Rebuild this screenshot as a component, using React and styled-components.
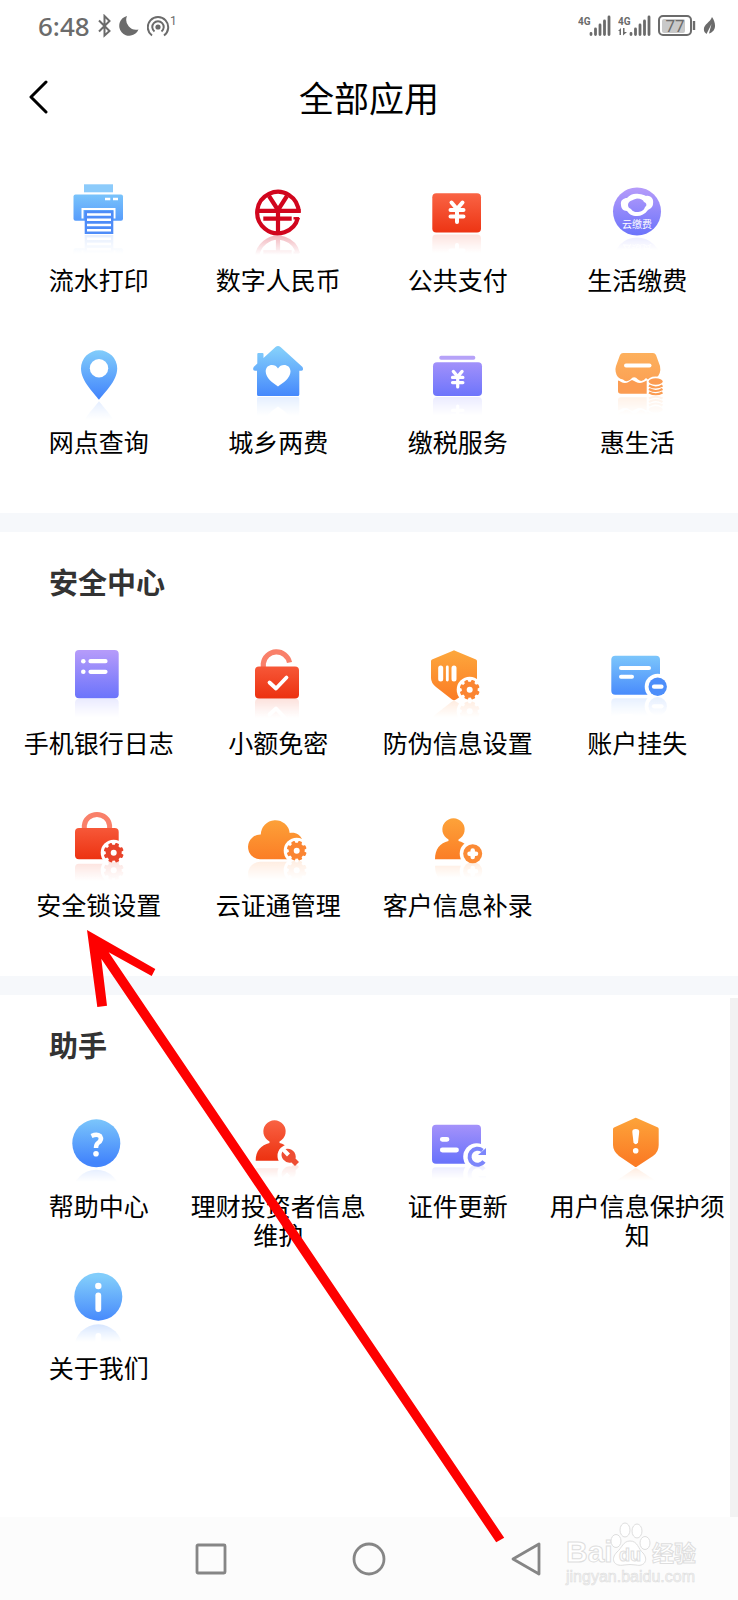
import React, { useId } from 'react';
import styled, { createGlobalStyle } from 'styled-components';

const GlobalStyle = createGlobalStyle`
  body {
    margin: 0;
    background: #fff;
    font-family: "Noto Sans CJK SC", "Noto Sans", sans-serif;
    color: #000;
  }

  button {
    border: 0;
    padding: 0;
    background: none;
    font: inherit;
    color: inherit;
    cursor: pointer;
  }

  svg {
    display: block;
  }
`

const Page = styled.div`
  position: relative;
  min-height: 100vh;
  display: flex;
  flex-direction: column;
  overflow: hidden;
`

const StatusBar = styled.div`
  display: flex;
  align-items: center;
  justify-content: space-between;
  height: 52px;
  padding: 0 22px 0 38px;
  color: #6b6b6b;
`

const StatusGroup = styled.div`
  display: flex;
  align-items: center;
  gap: ${props => props.$gap}px;
`

const Clock = styled.span`
  font: 500 26px/32px "Noto Sans", sans-serif;
`

const Header = styled.header`
  display: grid;
  grid-template-columns: 60px 1fr 60px;
  align-items: center;
  height: 90px;

  h1 {
    margin: 0;
    text-align: center;
    font-size: 35px;
    font-weight: 400;
    line-height: 44px;
  }
`

const BackButton = styled.button`
  padding-left: 28px;
`

const Section = styled.section`
  position: relative;
  flex: ${props => props.$fill ? '1 0 auto' : '0 0 auto'};
  padding: ${props => props.$first ? '34px 11px 13px 9px' : '29px 11px 13px 9px'};
`

const Heading = styled.h2`
  margin: 0 0 38px 40px;
  font-size: 29px;
  line-height: 40px;
  font-weight: 700;
  color: #333;
`

const AppGrid = styled.div`
  display: grid;
  grid-template-columns: repeat(4, 1fr);
  grid-auto-rows: 162px;
`

const AppButton = styled.button`
  display: flex;
  flex-direction: column;
  align-items: center;
`

const Label = styled.span`
  font-size: 25px;
  line-height: 29px;
`

const Divider = styled.div`
  height: 19px;
  background: #f6f8fb;
`

const ScrollTrack = styled.div`
  position: absolute;
  top: 3px;
  right: 0;
  bottom: 0;
  width: 8px;
  background: #f2f2f2;
`

const NavBar = styled.nav`
  position: relative;
  display: flex;
  justify-content: center;
  align-items: center;
  gap: 125px;
  height: 83px;
  background: #fcfcfc;
`

const Watermark = styled.svg`
  position: absolute;
  right: 36px;
  top: 2px;
`

const Pointer = styled.svg`
  position: absolute;
  left: 87px;
  top: 930px;
  pointer-events: none;
`

const gradients = {
  blue: ['#82cdfb', '#4385fc'],
  red: ['#fb6a4b', '#ec300f'],
  orange: ['#fda73c', '#fb7c25'],
  peach: ['#fdb25e', '#fb9a50'],
  purple: ['#b59bfa', '#6a73fb'],
}

function Gradients() {
  return (
    <svg width="0" height="0" style={{ position: 'absolute' }} aria-hidden="true">
      <defs>
        {Object.entries(gradients).map(([name, [from, to]]) => (
          <linearGradient key={name} id={name} gradientUnits="userSpaceOnUse" x1="0" y1="12" x2="0" y2="60">
            <stop offset="0" stopColor={from} />
            <stop offset="1" stopColor={to} />
          </linearGradient>
        ))}
      </defs>
    </svg>
  )
}

// draws the icon and its fading mirror image under the base line
function IconFrame({ base, fade = 20, glow = 0.15, children }) {
  const id = useId()

  return (
    <svg width="90" height="89" viewBox="0 0 90 89" aria-hidden="true">
      <defs>
        <linearGradient id={`${id}g`} gradientUnits="userSpaceOnUse" x1="0" y1={base} x2="0" y2={base + fade}>
          <stop offset="0" stopColor="#fff" stopOpacity={glow} />
          <stop offset="1" stopColor="#fff" stopOpacity="0" />
        </linearGradient>
        <mask id={`${id}m`} maskUnits="userSpaceOnUse" x="0" y={base} width="90" height={fade}>
          <rect x="0" y={base} width="90" height={fade} fill={`url(#${id}g)`} />
        </mask>
      </defs>
      {children}
      <g mask={`url(#${id}m)`}>
        <g transform={`translate(0 ${base * 2 + 1}) scale(1 -1)`}>{children}</g>
      </g>
    </svg>
  )
}

const white = { fill: 'none', stroke: '#fff', strokeLinecap: 'round', strokeLinejoin: 'round' }

function Gear({ x, y, color }) {
  return (
    <g transform={`translate(${x} ${y})`}>
      <circle r="13" fill="#fff" />
      <g fill={color}>
        <circle r="8" />
        {[0, 45, 90, 135].map(angle => (
          <rect key={angle} x="-2" y="-10" width="4" height="20" rx="1" transform={`rotate(${angle + 22})`} />
        ))}
      </g>
      <circle r="3" fill="#fff" />
    </g>
  )
}

function Yuan({ x, y, scale = 1 }) {
  return (
    <g transform={`translate(${x} ${y}) scale(${scale})`} {...white} strokeWidth="4">
      <path d="M-5.500 -9.500L0 -3L5.500 -9.500M0 -3V10M-6.500 -2H6.500M-6.500 4.500H6.500" />
    </g>
  )
}

const icons = {
  printer: (
    <IconFrame base={58}>
      <rect x="30" y="8.300" width="29" height="8" fill="#8ccbfb" />
      <rect x="19.500" y="18.500" width="49.500" height="26.300" rx="2" fill="url(#blue)" />
      <path d="M51 23H56.300M59 23H64" stroke="#fff" strokeWidth="2.600" />
      <path d="M28.500 42.500V33H60.500V42.500" fill="none" stroke="#fff" strokeWidth="2" />
      <rect x="30.700" y="34.700" width="28.600" height="23.300" fill="#4e8cf8" />
      <path d="M33 38.500H57M33 43.700H57M33 49H57M33 54.300H57" stroke="#fff" strokeWidth="2.500" />
    </IconFrame>
  ),
  ecny: (
    <IconFrame base={59} glow={0.3}>
      <g fill="none" stroke="#d1051d" strokeWidth="4.200">
        <path d="M65.600 36.500A20.700 20.700 0 1 0 65 41.500" />
        <path d="M25.500 34.800H67.700M30.300 42.700H58.700M45 34V57M36 20L45 34L54 20" />
        <path d="M60.500 42.300H66" strokeWidth="2.500" />
      </g>
    </IconFrame>
  ),
  payment: (
    <IconFrame base={57}>
      <rect x="19.300" y="17.300" width="48.700" height="39.300" rx="4" fill="url(#red)" />
      <Yuan x={44} y={36} />
    </IconFrame>
  ),
  cloudFee: (
    <IconFrame base={60} fade={14}>
      <circle cx="45" cy="35.500" r="24" fill="url(#purple)" />
      <path
        d="M29 29C28 24 32 22 35 22C38 18 43 17 47 18C50 18 52 19 54 20C59 19 62 23 61 28C61 31 58 33 56 34C53 38 49 40 45 40C40 40 37 38 35 35C31 35 29 32 29 29ZM36 29C36 25 41 24 45 22.500C49 22.500 51 24 52 26C55 27 55 30 53 31C52 35 48 36 45 36C41 36 40 34 39 33C37 32 36 31 36 29Z"
        fill="#fff"
        fillRule="evenodd"
      />
      <text x="45" y="52" textAnchor="middle" fontSize="10" fill="#fff">云缴费</text>
    </IconFrame>
  ),
  pin: (
    <IconFrame base={62}>
      <path d="M45 61.700C40 55 27 43 27 30.400A18.100 18.100 0 0 1 63.200 30.400C63.200 43 50 55 45 61.700Z" fill="url(#blue)" />
      <circle cx="45" cy="30.300" r="9.200" fill="#fff" />
    </IconFrame>
  ),
  house: (
    <IconFrame base={58}>
      <path
        d="M42.500 9Q45 7 47.500 9L69.500 29Q71 32.500 68.500 32.700H66.300V56.500Q66.300 58 64.800 58H25.500Q24 58 24 56.500V32.700H22Q19 32.500 20.700 29L24.300 25.500V16Q24.300 15 25.300 15H29.500Q30.500 15 30.500 16V20Z"
        fill="url(#blue)"
      />
      <path d="M45 48.500C40 45 32.700 40 32.700 33.500C32.700 26 42 25 45 30.500C48 25 57.500 26 57.500 33.500C57.500 40 50 45 45 48.500Z" fill="#fff" />
    </IconFrame>
  ),
  tax: (
    <IconFrame base={58}>
      <rect x="26.300" y="17.700" width="36" height="4" rx="1.800" fill="#b6a2f8" />
      <rect x="20" y="24.300" width="49" height="33.700" rx="4" fill="url(#purple)" />
      <Yuan x={44.7} y={41} scale={0.8} />
    </IconFrame>
  ),
  shop: (
    <IconFrame base={57}>
      <path d="M31 15H61Q63 15 64 17L68 28Q69.500 36 64 40C61 43 57 43 54 40Q50 45 46 41.500Q42 37 38.500 41.500Q34 45 31 41.500Q25 41 23.700 34Q23 31 24 28L28 17Q29 15 31 15Z" fill="url(#peach)" />
      <path d="M34 27.500H57.500" {...white} strokeWidth="4" />
      <path d="M26 42.500C28 43 30 45 33 45C36 45 37 43.500 40 42C43 43.500 45 45 48 45C50 45 52 44 54.700 42.500V55.700H29Q26 55.700 26 53Z" fill="#fb9c52" />
      <ellipse cx="63.700" cy="43.500" rx="8.500" ry="5" fill="#fff" />
      <ellipse cx="63.700" cy="43.500" rx="7" ry="3.300" fill="#fb9c52" />
      <path d="M57 47.500Q63.700 51.500 70.500 47.500M57 51Q63.700 55 70.500 51M57 54.500Q63.700 58 70.500 54.500" fill="none" stroke="#fb9c52" strokeWidth="2.200" />
    </IconFrame>
  ),
  log: (
    <IconFrame base={59}>
      <rect x="21" y="11" width="43.700" height="48.300" rx="4" fill="url(#purple)" />
      <circle cx="29.300" cy="22.200" r="2.300" fill="#fff" />
      <circle cx="29.300" cy="32.800" r="2.300" fill="#fff" />
      <path d="M36.500 22.200H51.500M36.500 32.800H51.500" {...white} strokeWidth="4.200" />
    </IconFrame>
  ),
  unlock: (
    <IconFrame base={59}>
      <path d="M30.300 29V24.500A13.300 13.300 0 0 1 56.500 23.500" fill="none" stroke="#f9806a" strokeWidth="5.200" />
      <rect x="22" y="27.500" width="44" height="32" rx="4" fill="url(#red)" />
      <path d="M36.500 43.500L43 49.500L53.500 38.500" {...white} strokeWidth="3.800" />
    </IconFrame>
  ),
  shieldGear: (
    <IconFrame base={61} fade={18}>
      <path d="M40 11.700Q41 11 42 11.700L63 20.500Q64 21 64 22V42Q64 46 60 49L43 60.500Q41 62 39 60.500L23 48Q18 44 18 39V22Q18 21 19 20.500Z" fill="url(#orange)" />
      <path d="M27.700 29V40M41 29V40" {...white} strokeWidth="5" />
      <path d="M34.300 28V41" {...white} strokeWidth="2.800" />
      <Gear x={56.7} y={50.7} color="#fb8532" />
    </IconFrame>
  ),
  cardMinus: (
    <IconFrame base={57}>
      <rect x="19.300" y="16.700" width="48.700" height="39" rx="4" fill="url(#blue)" />
      <path d="M29 29H57M29 37.700H40" {...white} strokeWidth="4" />
      <circle cx="65.700" cy="47.700" r="13" fill="#fff" />
      <circle cx="65.700" cy="47.700" r="9.200" fill="#4d8efa" />
      <path d="M62 47.700H69.500" {...white} strokeWidth="4.200" />
    </IconFrame>
  ),
  lockGear: (
    <IconFrame base={60}>
      <path d="M30.300 28V24.500A12.700 12 0 0 1 55.600 24.500V28" fill="none" stroke="#f9806a" strokeWidth="5" />
      <rect x="21" y="27" width="43.700" height="31.300" rx="4" fill="url(#red)" />
      <Gear x={59.7} y={51.7} color="#e8432a" />
    </IconFrame>
  ),
  cloudGear: (
    <IconFrame base={59}>
      <path d="M27 58.300A12.300 12.300 0 1 1 27.800 33.600A14.500 14.500 0 0 1 56.700 32C63 31 67 34 69 38V58.300Z" fill="url(#orange)" />
      <Gear x={63.7} y={49.7} color="#fb8532" />
    </IconFrame>
  ),
  userPlus: (
    <IconFrame base={61} fade={16}>
      <path d="M35.500 38.500A11.200 11.200 0 1 1 45.500 38.500V40C53 42 57 46 58 58.300H22C22 48 27 42 35.500 40Z" fill="url(#orange)" />
      <circle cx="59.700" cy="52.700" r="13" fill="#fff" />
      <circle cx="59.700" cy="52.700" r="9.500" fill="#fb8a35" />
      <path d="M59.700 49.500V56M56.500 52.700H63" {...white} strokeWidth="4.500" />
    </IconFrame>
  ),
  help: (
    <IconFrame base={66} fade={14}>
      <circle cx="42.300" cy="41.300" r="24" fill="url(#blue)" />
      <path d="M37.500 34Q43 31.500 46 34Q48.500 38 44 41Q42 42.500 42 46" {...white} strokeLinecap="butt" strokeWidth="4.500" />
      <circle cx="42" cy="51.700" r="2.800" fill="#fff" />
    </IconFrame>
  ),
  userWrench: (
    <IconFrame base={62} fade={14}>
      <path d="M36.500 39.500A11.200 11.200 0 1 1 46.500 39.500V41C54 43 58 47 59 58.700H22.700C22.700 49 28 43 36.500 41Z" fill="url(#red)" />
      <circle cx="56" cy="54" r="11.500" fill="#fff" />
      <path d="M56 54L64 62" stroke="#fff" strokeWidth="9" />
      <path d="M49.300 49.500L54 54.500L57 51.500L52.500 47A8 8 0 0 1 62.500 56.500L66 60L62 64L58.500 60.500A8 8 0 0 1 49.300 49.500Z" fill="#ee4d33" />
    </IconFrame>
  ),
  idRefresh: (
    <IconFrame base={63} fade={14}>
      <rect x="19" y="22.700" width="49" height="39" rx="4" fill="url(#purple)" />
      <path d="M29.300 37.300H34M29.300 48H43.500" {...white} strokeWidth="4.800" />
      <circle cx="63.700" cy="54.700" r="13.500" fill="#fff" />
      <path d="M71 59.500A8 8 0 1 1 69.500 48.500" fill="none" stroke="#7c86fb" strokeWidth="4" />
      <path d="M73 46V53H65Z" fill="#7c86fb" />
    </IconFrame>
  ),
  shieldAlert: (
    <IconFrame base={65} fade={14}>
      <path d="M43 16Q43.700 15.500 44.500 16L66 25.500Q66.700 26 66.700 27V43Q66.700 50 61 54L45 64.500Q43.700 65.500 42.500 64.500L27 54Q21 49 21 43V27Q21 26 22 25.500Z" fill="url(#orange)" />
      <path d="M43.700 27Q47.500 27 47.200 30L46 40.500Q43.700 44 41.500 40.500L40.300 30Q40 27 43.700 27Z" fill="#fff" />
      <circle cx="43.700" cy="48.800" r="2.800" fill="#fff" />
    </IconFrame>
  ),
  info: (
    <IconFrame base={58} glow={0.25}>
      <circle cx="44.300" cy="32.700" r="24" fill="url(#blue)" />
      <circle cx="44.300" cy="22" r="3.200" fill="#fff" />
      <path d="M44.300 31.500V45" {...white} strokeWidth="5.800" />
    </IconFrame>
  ),
}

const commonApps = [
  ['printer', '流水打印'],
  ['ecny', '数字人民币'],
  ['payment', '公共支付'],
  ['cloudFee', '生活缴费'],
  ['pin', '网点查询'],
  ['house', '城乡两费'],
  ['tax', '缴税服务'],
  ['shop', '惠生活'],
]

const securityApps = [
  ['log', '手机银行日志'],
  ['unlock', '小额免密'],
  ['shieldGear', '防伪信息设置'],
  ['cardMinus', '账户挂失'],
  ['lockGear', '安全锁设置'],
  ['cloudGear', '云证通管理'],
  ['userPlus', '客户信息补录'],
]

const helperApps = [
  ['help', '帮助中心'],
  ['userWrench', '理财投资者信息维护'],
  ['idRefresh', '证件更新'],
  ['shieldAlert', '用户信息保护须知'],
  ['info', '关于我们'],
]

function Apps({ items }) {
  return (
    <AppGrid>
      {items.map(([icon, label]) => (
        <AppButton key={icon} type="button">
          {icons[icon]}
          <Label>{label}</Label>
        </AppButton>
      ))}
    </AppGrid>
  )
}

function Signal({ data }) {
  return (
    <svg width="33" height="22" viewBox="0 0 33 22" fill="currentColor">
      <text x="0" y="10" fontFamily="Roboto, sans-serif" fontSize="10" fontWeight="700">4G</text>
      {data && <path d="M0 16L3 13V20H1.500V16ZM5 13H6.500V17H9L5 20.500Z" />}
      <path d="M13 18.500V19.500M17.500 14V19.500M22 10V19.500M26.500 6V19.500M31 2V19.500" stroke="currentColor" strokeWidth="2.800" strokeLinecap="round" />
    </svg>
  )
}

function Status() {
  return (
    <StatusBar>
      <StatusGroup $gap={8}>
        <Clock>6:48</Clock>
        <svg width="13" height="24" viewBox="0 0 13 24" fill="none" stroke="currentColor" strokeWidth="2">
          <path d="M1 6.500L11.500 17L6.500 21.500V2L11.500 7L1 17.500" />
        </svg>
        <svg width="20" height="20" viewBox="0 0 20 20" fill="currentColor">
          <path d="M8 0A10 10 0 1 0 19.500 13.500A10 10 0 0 1 8 0Z" />
        </svg>
        <svg width="30" height="24" viewBox="0 0 30 24" fill="none" stroke="currentColor" strokeWidth="2">
          <circle cx="11" cy="13" r="2.600" fill="currentColor" stroke="none" />
          <path d="M7.500 17.500A5.700 5.700 0 1 1 14.500 17.500M5 21.500A10.200 10.200 0 1 1 17 21.500" />
          <text x="23" y="11" fontFamily="Roboto, sans-serif" fontSize="12" fill="currentColor" stroke="none">1</text>
        </svg>
      </StatusGroup>
      <StatusGroup $gap={7}>
        <Signal />
        <Signal data />
        <svg width="38" height="22" viewBox="0 0 38 22">
          <rect x="4" y="4" width="23" height="14" rx="2" fill="#c9c9c9" />
          <rect x="1" y="1" width="32" height="19" rx="4" fill="none" stroke="currentColor" strokeWidth="2" />
          <path d="M36 6V15" stroke="currentColor" strokeWidth="2.400" />
          <text x="17" y="17" textAnchor="middle" fontFamily="Roboto, sans-serif" fontSize="17" fill="currentColor">77</text>
        </svg>
        <svg width="13" height="20" viewBox="0 0 13 20" fill="currentColor">
          <path d="M9 1C13 7 14 15 6 17.500L8.500 8L3.500 18L1.500 16C-1.500 9 7 7 9 1Z" />
        </svg>
      </StatusGroup>
    </StatusBar>
  )
}

function Brand() {
  return (
    <Watermark width="140" height="70" viewBox="0 0 140 70" fill="#fff" stroke="#dedede" strokeWidth="1">
      <g fontFamily="Liberation Sans, sans-serif" fontWeight="700">
        <text x="4" y="43" fontSize="30">Bai</text>
        <text x="90" y="42" fontSize="22" fontFamily="Noto Sans CJK SC, sans-serif">经验</text>
      </g>
      <ellipse cx="54" cy="22" rx="5" ry="6.500" />
      <ellipse cx="63" cy="11" rx="5" ry="7" />
      <ellipse cx="75" cy="12" rx="5" ry="7" />
      <ellipse cx="83" cy="24" rx="5" ry="6.500" />
      <path d="M68 22C76 22 76 30 81 34C87 41 82 48 74 46Q68 45 62 46C52 48 48 40 55 33C60 29 61 22 68 22Z" />
      <text x="68" y="42" textAnchor="middle" fontFamily="Liberation Sans, sans-serif" fontSize="18" fontWeight="700">du</text>
      <text x="4" y="63" fontFamily="Liberation Sans, sans-serif" fontSize="16" fill="#f4f4f4" strokeWidth=".6">jingyan.baidu.com</text>
    </Watermark>
  )
}

function App() {
  return (
    <Page>
      <GlobalStyle />
      <Gradients />
      <Status />

      <Header>
        <BackButton type="button" aria-label="返回">
          <svg width="20" height="34" viewBox="0 0 20 34" fill="none" stroke="#000" strokeWidth="3" strokeLinecap="round" strokeLinejoin="round">
            <path d="M18 2L3 17L18 32" />
          </svg>
        </BackButton>
        <h1>全部应用</h1>
      </Header>

      <Section $first>
        <Apps items={commonApps} />
      </Section>
      <Divider />
      <Section>
        <Heading>安全中心</Heading>
        <Apps items={securityApps} />
      </Section>
      <Divider />
      <Section $fill>
        <Heading>助手</Heading>
        <Apps items={helperApps} />
        <ScrollTrack />
      </Section>

      <NavBar>
        <button type="button" aria-label="最近任务">
          <svg width="32" height="34" viewBox="0 0 32 34" fill="none" stroke="#868686" strokeWidth="2.800">
            <rect x="2" y="3" width="28" height="28" rx="1" />
          </svg>
        </button>
        <button type="button" aria-label="主屏幕">
          <svg width="34" height="34" viewBox="0 0 34 34" fill="none" stroke="#868686" strokeWidth="2.800">
            <circle cx="17" cy="17" r="15" />
          </svg>
        </button>
        <button type="button" aria-label="返回上一页">
          <svg width="32" height="34" viewBox="0 0 32 34" fill="none" stroke="#868686" strokeWidth="2.800" strokeLinejoin="round">
            <path d="M28 2V32L2 17Z" />
          </svg>
        </button>
        <Brand />
      </NavBar>

      <Pointer width="418" height="614" viewBox="0 0 418 614" aria-hidden="true">
        <path d="M0 0L68.300 39L64.700 46L21.700 22.300L417.200 607.700L409.200 612.300L14.300 28.700L20 75.700L10.300 77Z" fill="#fe0000" />
      </Pointer>
    </Page>
  )
}

export default App
